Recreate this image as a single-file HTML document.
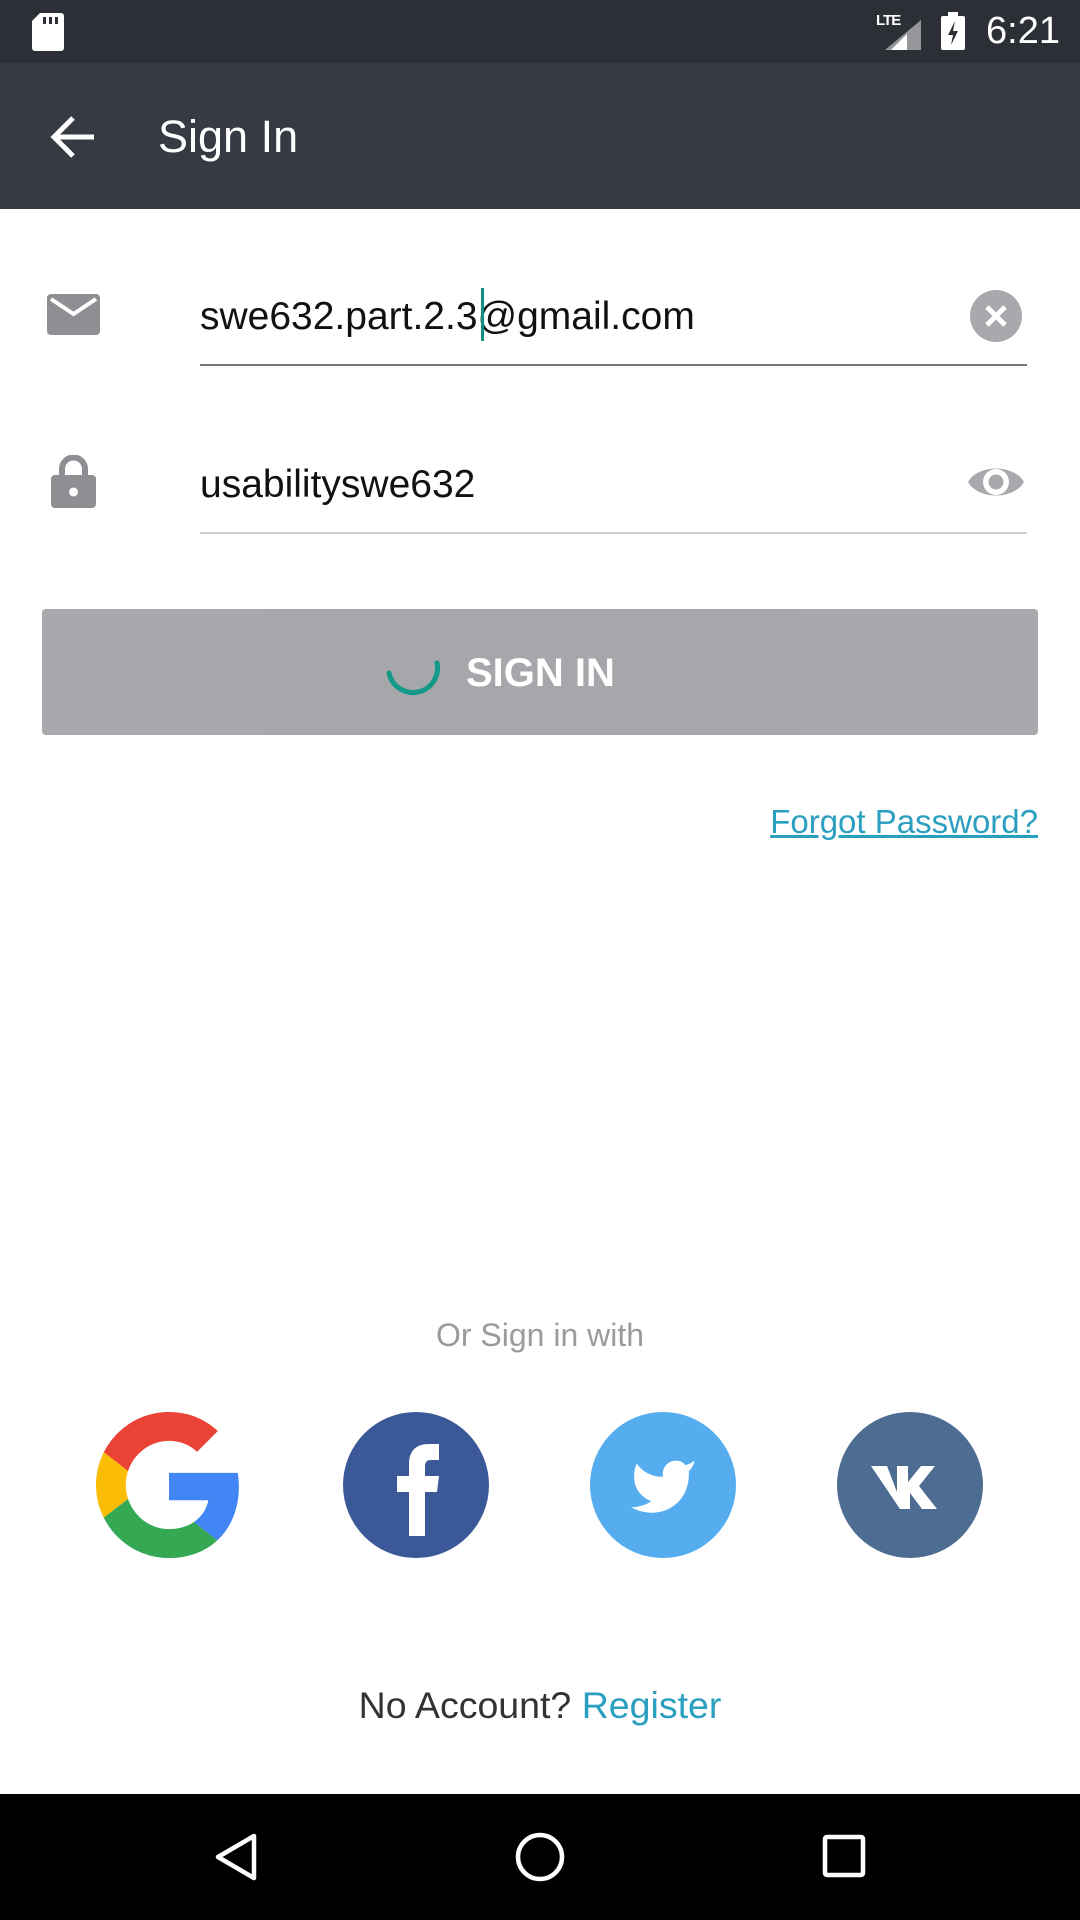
<!DOCTYPE html>
<html><head><meta charset="utf-8"><style>
*{margin:0;padding:0;box-sizing:border-box}
body{width:1080px;height:1920px;background:#fff;position:relative;overflow:hidden;font-family:"Liberation Sans",sans-serif}
.abs{position:absolute}
</style></head><body>
<div class="abs" style="left:0;top:0;width:1080px;height:63px;background:#2c2f35"></div>
<div class="abs" style="left:0;top:63px;width:1080px;height:146px;background:#353a43"></div>
<svg class="abs" style="left:32px;top:13px" width="32" height="38" viewBox="0 0 32 38"><path d="M8 0H29a3 3 0 0 1 3 3V35a3 3 0 0 1-3 3H3a3 3 0 0 1-3-3V8Z" fill="#fff"/><rect x="11" y="4" width="3" height="7" fill="#2c2f35"/><rect x="17" y="4" width="3" height="7" fill="#2c2f35"/><rect x="23" y="4" width="3" height="7" fill="#2c2f35"/></svg>
<div class="abs" style="left:876px;top:12px;color:#fff;font-size:15px;font-weight:bold;letter-spacing:-1px">LTE</div>
<svg class="abs" style="left:885px;top:20px" width="36" height="30"><path d="M36 0V30H0Z" fill="#fff" opacity=".5"/><path d="M22 14V30H6Z" fill="#fff"/></svg>
<svg class="abs" style="left:941px;top:12px" width="24" height="38"><rect x="0" y="4" width="24" height="34" rx="2" fill="#fff"/><rect x="7" y="0" width="10" height="5" fill="#fff"/><path d="M14 9L7 23H12L10 33L17 19H12Z" fill="#2c2f35"/></svg>
<div class="abs" style="left:986px;top:10px;color:#fff;font-size:38px">6:21</div>
<svg class="abs" style="left:50px;top:114px" width="46" height="46" viewBox="0 0 46 46"><path d="M44 23H5M23 4L4 23L23 42" stroke="#fff" stroke-width="5" fill="none"/></svg>
<div class="abs" style="left:158px;top:112px;color:#fff;font-size:45px;line-height:50px">Sign In</div>
<svg class="abs" style="left:47px;top:294px" width="53" height="41" viewBox="0 0 53 41"><rect width="53" height="41" rx="4" fill="#8e8e93"/><path d="M4 5L26.5 20L49 5" stroke="#fff" stroke-width="4" fill="none"/></svg>
<div class="abs" style="left:200px;top:292px;font-size:39px;color:#111;line-height:50px">swe632.part.2.3@gmail.com</div>
<div class="abs" style="left:481px;top:288px;width:3px;height:53px;background:#138e80"></div>
<div class="abs" style="left:200px;top:364px;width:827px;height:2px;background:#777"></div>
<svg class="abs" style="left:970px;top:290px" width="52" height="52"><circle cx="26" cy="26" r="26" fill="#a9a9ad"/><path d="M17 17L35 35M35 17L17 35" stroke="#fff" stroke-width="5"/></svg>
<svg class="abs" style="left:51px;top:455px" width="45" height="53" viewBox="0 0 45 53"><path d="M11 22V14a11.5 11.5 0 0 1 23 0V22" stroke="#8e8e93" stroke-width="6" fill="none"/><rect y="20" width="45" height="33" rx="4" fill="#8e8e93"/><circle cx="22.5" cy="37" r="4.5" fill="#fff"/></svg>
<div class="abs" style="left:200px;top:460px;font-size:39px;color:#111;line-height:50px">usabilityswe632</div>
<div class="abs" style="left:200px;top:532px;width:827px;height:2px;background:#ccc"></div>
<svg class="abs" style="left:966px;top:460px" width="60" height="44" viewBox="0 0 60 44"><path d="M2 22C12 4 48 4 58 22C48 40 12 40 2 22Z" fill="#a9a9ad"/><circle cx="30" cy="22" r="13" fill="#fff"/><circle cx="30" cy="22" r="7.5" fill="#a9a9ad"/></svg>
<div class="abs" style="left:42px;top:609px;width:996px;height:126px;background:#a8a9ac;border-radius:4px"></div>
<div class="abs" style="left:266px;top:609px;width:536px;height:126px;background:#a6a7aa"></div>
<svg class="abs" style="left:385px;top:645px" width="56" height="56"><path d="M52 18 A24 24 0 0 1 4 28" stroke="#149988" stroke-width="5" fill="none" stroke-linecap="round"/></svg>
<div class="abs" style="left:466px;top:650px;color:#fff;font-size:40px;font-weight:bold;line-height:46px">SIGN IN</div>
<div class="abs" style="right:42px;top:802px;color:#2b9fc0;font-size:33px;text-decoration:underline;line-height:40px">Forgot Password?</div>
<div class="abs" style="left:0;width:1080px;top:1315px;text-align:center;color:#9b9b9b;font-size:32px;line-height:40px">Or Sign in with</div>
<svg class="abs" style="left:96px;top:1412px" width="146" height="146" viewBox="0 0 48 48"><path fill="#EA4335" d="M24 9.5c3.54 0 6.71 1.22 9.21 3.6l6.85-6.85C35.9 2.38 30.47 0 24 0 14.62 0 6.51 5.38 2.560 13.22l7.98 6.19C12.43 13.72 17.74 9.5 24 9.5z"/><path fill="#4285F4" d="M46.98 24.55c0-1.570-.15-3.090-.38-4.550H24v9.020h12.94c-.58 2.960-2.260 5.480-4.780 7.180l7.730 6c4.510-4.180 7.090-10.360 7.090-17.650z"/><path fill="#FBBC05" d="M10.53 28.59c-.48-1.45-.76-2.99-.76-4.59s.27-3.14.76-4.59l-7.98-6.19C.92 16.46 0 20.12 0 24c0 3.88.92 7.54 2.56 10.78l7.97-6.19z"/><path fill="#34A853" d="M24 48c6.48 0 11.93-2.13 15.89-5.81l-7.73-6c-2.15 1.45-4.92 2.3-8.16 2.3-6.26 0-11.57-4.22-13.47-9.91l-7.98 6.19C6.51 42.62 14.62 48 24 48z"/></svg>
<svg class="abs" style="left:343px;top:1412px" width="146" height="146"><circle cx="73" cy="73" r="73" fill="#3b5998"/><path d="M66 124V80H54V64H66V52c0-14 8-20 20-20h10V48H88c-5 0-6 3-6 7V64H96L94 80H82V124Z" fill="#fff"/></svg>
<svg class="abs" style="left:590px;top:1412px" width="146" height="146"><circle cx="73" cy="73" r="73" fill="#55acee"/><path transform="translate(38 40) scale(2.9)" d="M23 3a10.9 10.9 0 0 1-3.14 1.53 4.48 4.48 0 0 0-7.86 3v1A10.66 10.66 0 0 1 3 4s-4 9 5 13a11.64 11.64 0 0 1-7 2c9 5 20 0 20-11.5a4.5 4.5 0 0 0-.08-.83A7.72 7.72 0 0 0 23 3z" fill="#fff"/></svg>
<svg class="abs" style="left:837px;top:1412px" width="146" height="146"><circle cx="73" cy="73" r="73" fill="#4c6c91"/><path d="M34 54H50L60 80V54H71V70L84 54H98L82 74L100 97H85L73 81V97H63Z" fill="#fff"/></svg>
<div class="abs" style="left:0;width:1080px;top:1683px;text-align:center;font-size:37.5px;line-height:44px;color:#333"><span>No Account? </span><span style="color:#2b9fc0">Register</span></div>
<div class="abs" style="left:0;top:1794px;width:1080px;height:126px;background:#000"></div>
<svg class="abs" style="left:214px;top:1832px" width="46" height="50"><path d="M40 4V46L4 25Z" stroke="#fff" stroke-width="4.5" fill="none" stroke-linejoin="round"/></svg>
<svg class="abs" style="left:514px;top:1831px" width="52" height="52"><circle cx="26" cy="26" r="22" stroke="#fff" stroke-width="4.5" fill="none"/></svg>
<svg class="abs" style="left:822px;top:1834px" width="44" height="44"><rect x="3" y="3" width="38" height="38" rx="2" stroke="#fff" stroke-width="4.5" fill="none"/></svg>
</body></html>
